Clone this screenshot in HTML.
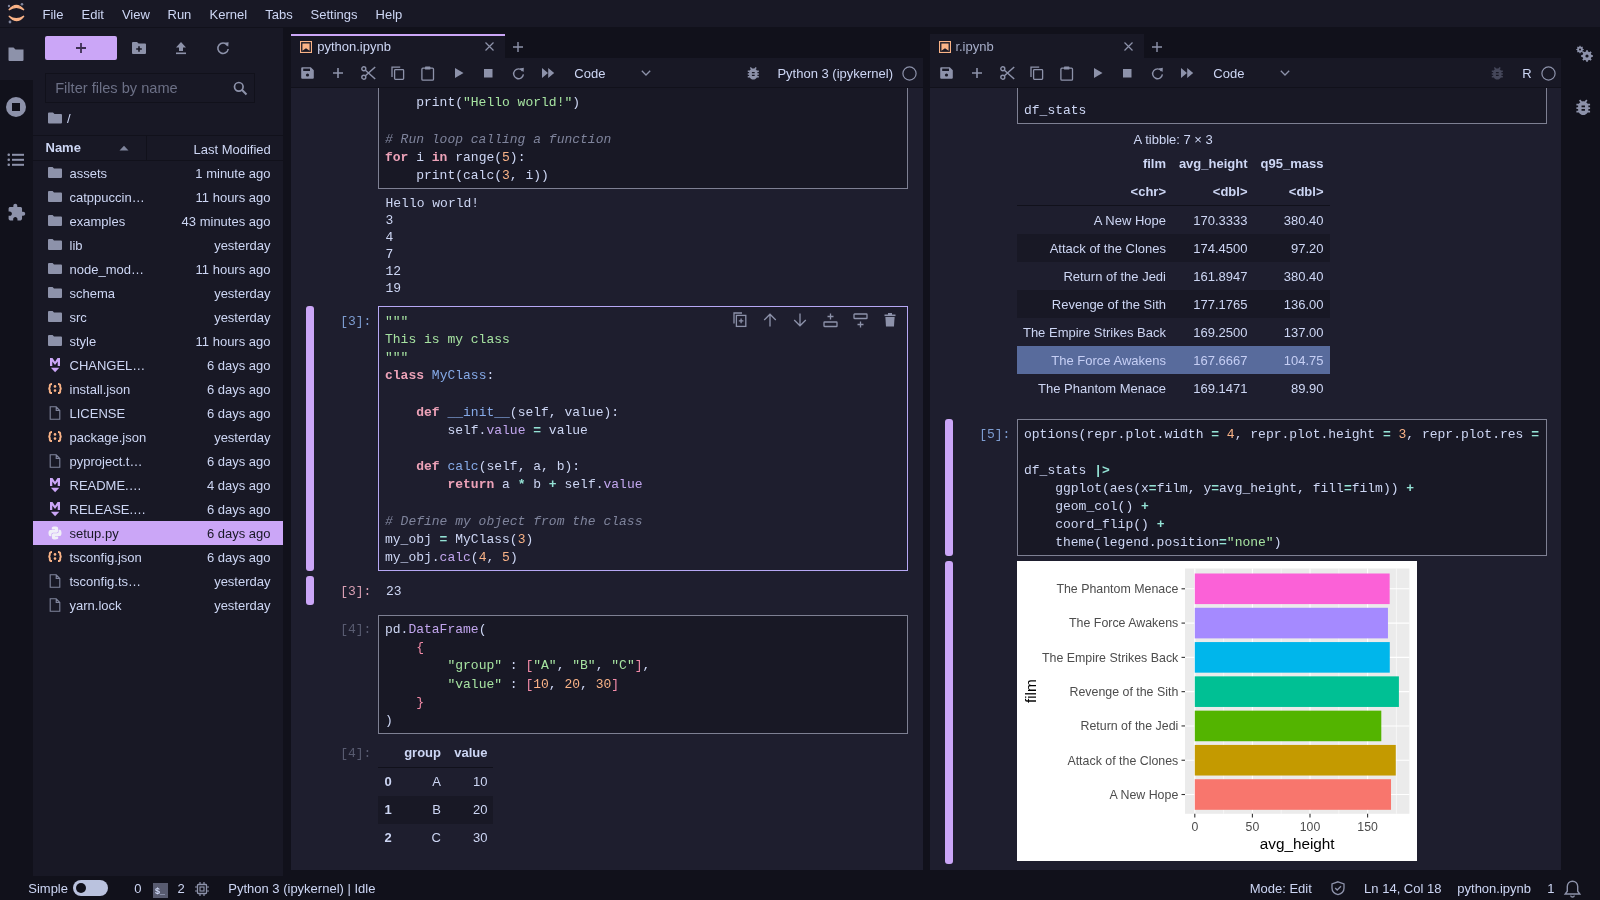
<!DOCTYPE html>
<html><head><meta charset="utf-8"><title>JupyterLab</title><style>
*{margin:0;padding:0;box-sizing:border-box}
html,body{width:1600px;height:900px;overflow:hidden;background:#11111b;font-family:"Liberation Sans",sans-serif;}
div{position:absolute}
.t{white-space:pre}
svg{position:absolute;overflow:visible}
.code{font-family:"Liberation Mono",monospace;font-size:13px;white-space:pre;color:#cdd6f4}
.code div{position:absolute;left:0}
.k{color:#eda2b8;font-weight:bold}
.s{color:#a6e3a1}
.n{color:#fab387}
.o{color:#94e2d5;font-weight:bold}
.f{color:#86aae8}
.p{color:#c2a6ee}
.c{color:#7f849c;font-style:italic}
.br{color:#f38ba8}
</style></head>
<body>
<div id="root" style="left:0;top:0;width:1600px;height:900px;will-change:transform"><div style="left:0;top:0;width:1600px;height:27px;background:#181825"></div><div style="left:0;top:28px;width:33px;height:848px;background:#11111b"></div><div style="left:0;top:28px;width:33px;height:52px;background:#181825"></div><div style="left:33px;top:28px;width:250px;height:848px;background:#181825"></div><svg style="left:0;top:0" width="30" height="27" viewBox="0 0 30 27">
<path d="M8.8 10 Q16.3 0.8 24 10 Q16.3 4.6 8.8 10Z" fill="#fab387" stroke="#fab387" stroke-width="1.2"/>
<path d="M8.8 16 Q16.3 25.4 24 16 Q16.3 21.4 8.8 16Z" fill="#fab387" stroke="#fab387" stroke-width="1.2"/>
<circle cx="9" cy="6" r="1.2" fill="#7f849c"/><circle cx="22" cy="4.2" r="1.3" fill="#7f849c"/><circle cx="10" cy="22" r="1.4" fill="#7f849c"/>
</svg><div class="t" style="left:42.5px;top:4.50px;font-size:13px;line-height:20px;color:#cdd6f4;font-weight:normal;font-family:'Liberation Sans', sans-serif;">File</div><div class="t" style="left:81.5px;top:4.50px;font-size:13px;line-height:20px;color:#cdd6f4;font-weight:normal;font-family:'Liberation Sans', sans-serif;">Edit</div><div class="t" style="left:121.9px;top:4.50px;font-size:13px;line-height:20px;color:#cdd6f4;font-weight:normal;font-family:'Liberation Sans', sans-serif;">View</div><div class="t" style="left:167.5px;top:4.50px;font-size:13px;line-height:20px;color:#cdd6f4;font-weight:normal;font-family:'Liberation Sans', sans-serif;">Run</div><div class="t" style="left:209.6px;top:4.50px;font-size:13px;line-height:20px;color:#cdd6f4;font-weight:normal;font-family:'Liberation Sans', sans-serif;">Kernel</div><div class="t" style="left:265.25px;top:4.50px;font-size:13px;line-height:20px;color:#cdd6f4;font-weight:normal;font-family:'Liberation Sans', sans-serif;">Tabs</div><div class="t" style="left:310.6px;top:4.50px;font-size:13px;line-height:20px;color:#cdd6f4;font-weight:normal;font-family:'Liberation Sans', sans-serif;">Settings</div><div class="t" style="left:375.6px;top:4.50px;font-size:13px;line-height:20px;color:#cdd6f4;font-weight:normal;font-family:'Liberation Sans', sans-serif;">Help</div><svg style="left:7px;top:46px" width="18" height="16" viewBox="0 0 18 16"><path d="M1.5 1.5h5l2 2h8v10.5a1 1 0 0 1-1 1h-13a1 1 0 0 1-1-1z" fill="#8d92aa"/></svg><svg style="left:5px;top:96px" width="22" height="22" viewBox="0 0 22 22"><circle cx="11" cy="11" r="10" fill="#8d92aa"/><rect x="7" y="7" width="8" height="8" fill="#11111b"/></svg><svg style="left:7px;top:153px" width="18" height="14" viewBox="0 0 18 14"><g fill="#8d92aa"><rect x="0.5" y="0.5" width="2.5" height="2.5" rx="1"/><rect x="0.5" y="5.5" width="2.5" height="2.5" rx="1"/><rect x="0.5" y="10.5" width="2.5" height="2.5" rx="1"/><rect x="5" y="0.8" width="12" height="2"/><rect x="5" y="5.8" width="12" height="2"/><rect x="5" y="10.8" width="12" height="2"/></g></svg><svg style="left:7px;top:203px" width="19" height="19" viewBox="0 0 24 24"><path d="M20.5 11H19V7c0-1.1-.9-2-2-2h-4V3.5C13 2.12 11.88 1 10.5 1S8 2.12 8 3.5V5H4c-1.1 0-1.99.9-1.99 2v3.8H3.5c1.49 0 2.7 1.21 2.7 2.7s-1.21 2.7-2.7 2.7H2V20c0 1.1.9 2 2 2h3.8v-1.5c0-1.49 1.21-2.7 2.7-2.7 1.49 0 2.7 1.21 2.7 2.7V22H17c1.1 0 2-.9 2-2v-4h1.5c1.38 0 2.5-1.12 2.5-2.5S21.88 11 20.5 11z" fill="#8d92aa"/></svg><div style="left:45px;top:36px;width:72px;height:24px;background:#cba6f7;border-radius:2px"></div><svg style="left:75px;top:42px" width="12" height="12" viewBox="0 0 12 12"><path d="M6 1v10M1 6h10" stroke="#3e3052" stroke-width="1.8"/></svg><svg style="left:131px;top:41px" width="16" height="14" viewBox="0 0 16 14"><path d="M1 2a1 1 0 0 1 1-1h4l1.6 1.6H14a1 1 0 0 1 1 1V12a1 1 0 0 1-1 1H2a1 1 0 0 1-1-1z" fill="#8d92aa"/><path d="M8 5.2v5.6M5.2 8h5.6" stroke="#181825" stroke-width="1.6"/></svg><svg style="left:175px;top:41px" width="12" height="14" viewBox="0 0 12 14"><path d="M6 1 L11 6.5 H8 V10 H4 V6.5 H1Z" fill="#8d92aa"/><rect x="1" y="11.5" width="10" height="1.6" fill="#8d92aa"/></svg><svg style="left:216px;top:41px" width="14" height="14" viewBox="0 0 14 14"><path d="M11.3 4.2A5.2 5.2 0 1 0 12.2 8" fill="none" stroke="#8d92aa" stroke-width="1.6"/><path d="M8 1.8 L12.6 1.2 L12.2 5.8Z" fill="#8d92aa"/></svg><div style="left:45px;top:73px;width:210px;height:30px;border:1px solid #11111b;background:#181825"></div><div class="t" style="left:55.2px;top:78.24px;font-size:14.6px;line-height:20px;color:#6c7086;font-weight:normal;font-family:'Liberation Sans', sans-serif;">Filter files by name</div><svg style="left:233px;top:81px" width="15" height="15" viewBox="0 0 15 15"><circle cx="5.8" cy="5.8" r="4.3" fill="none" stroke="#8d92aa" stroke-width="1.7"/><path d="M8.8 8.8 L13.5 13.5" stroke="#8d92aa" stroke-width="2"/></svg><svg style="left:47px;top:112px" width="16" height="12" viewBox="0 0 16 12"><path d="M1 1.5a1 1 0 0 1 1-1h4l1.5 1.5H14a1 1 0 0 1 1 1V10.5a1 1 0 0 1-1 1H2a1 1 0 0 1-1-1z" fill="#8d92aa"/></svg><div class="t" style="left:67px;top:108.50px;font-size:13px;line-height:20px;color:#cdd6f4;font-weight:normal;font-family:'Liberation Sans', sans-serif;">/</div><div style="left:33px;top:135px;width:250px;height:1px;background:#11111b"></div><div style="left:33px;top:160px;width:250px;height:1px;background:#11111b"></div><div style="left:146px;top:136px;width:1px;height:24px;background:#11111b"></div><div class="t" style="left:45.5px;top:137.50px;font-size:13px;line-height:20px;color:#cdd6f4;font-weight:bold;font-family:'Liberation Sans', sans-serif;">Name</div><svg style="left:119px;top:145px" width="10" height="6" viewBox="0 0 10 6"><path d="M0.5 5.5 L5 0.8 L9.5 5.5Z" fill="#7f849c"/></svg><div class="t" style="left:150.8px;width:120px;text-align:right;top:139.50px;font-size:13px;line-height:20px;color:#cdd6f4;font-weight:normal;font-family:'Liberation Sans', sans-serif;">Last Modified</div><svg style="left:48px;top:167px" width="14" height="11" viewBox="0 0 14 11"><path d="M0 1a1 1 0 0 1 1-1h3.6l1.4 1.4H13a1 1 0 0 1 1 1V10a1 1 0 0 1-1 1H1a1 1 0 0 1-1-1z" fill="#8d92aa"/></svg><div class="t" style="left:69.5px;top:164.00px;font-size:13px;line-height:20px;color:#cdd6f4;font-weight:normal;font-family:'Liberation Sans', sans-serif;">assets</div><div class="t" style="left:150.5px;width:120px;text-align:right;top:164.00px;font-size:13px;line-height:20px;color:#cdd6f4;font-weight:normal;font-family:'Liberation Sans', sans-serif;">1 minute ago</div><svg style="left:48px;top:191px" width="14" height="11" viewBox="0 0 14 11"><path d="M0 1a1 1 0 0 1 1-1h3.6l1.4 1.4H13a1 1 0 0 1 1 1V10a1 1 0 0 1-1 1H1a1 1 0 0 1-1-1z" fill="#8d92aa"/></svg><div class="t" style="left:69.5px;top:188.00px;font-size:13px;line-height:20px;color:#cdd6f4;font-weight:normal;font-family:'Liberation Sans', sans-serif;">catppuccin…</div><div class="t" style="left:150.5px;width:120px;text-align:right;top:188.00px;font-size:13px;line-height:20px;color:#cdd6f4;font-weight:normal;font-family:'Liberation Sans', sans-serif;">11 hours ago</div><svg style="left:48px;top:215px" width="14" height="11" viewBox="0 0 14 11"><path d="M0 1a1 1 0 0 1 1-1h3.6l1.4 1.4H13a1 1 0 0 1 1 1V10a1 1 0 0 1-1 1H1a1 1 0 0 1-1-1z" fill="#8d92aa"/></svg><div class="t" style="left:69.5px;top:212.00px;font-size:13px;line-height:20px;color:#cdd6f4;font-weight:normal;font-family:'Liberation Sans', sans-serif;">examples</div><div class="t" style="left:150.5px;width:120px;text-align:right;top:212.00px;font-size:13px;line-height:20px;color:#cdd6f4;font-weight:normal;font-family:'Liberation Sans', sans-serif;">43 minutes ago</div><svg style="left:48px;top:239px" width="14" height="11" viewBox="0 0 14 11"><path d="M0 1a1 1 0 0 1 1-1h3.6l1.4 1.4H13a1 1 0 0 1 1 1V10a1 1 0 0 1-1 1H1a1 1 0 0 1-1-1z" fill="#8d92aa"/></svg><div class="t" style="left:69.5px;top:236.00px;font-size:13px;line-height:20px;color:#cdd6f4;font-weight:normal;font-family:'Liberation Sans', sans-serif;">lib</div><div class="t" style="left:150.5px;width:120px;text-align:right;top:236.00px;font-size:13px;line-height:20px;color:#cdd6f4;font-weight:normal;font-family:'Liberation Sans', sans-serif;">yesterday</div><svg style="left:48px;top:263px" width="14" height="11" viewBox="0 0 14 11"><path d="M0 1a1 1 0 0 1 1-1h3.6l1.4 1.4H13a1 1 0 0 1 1 1V10a1 1 0 0 1-1 1H1a1 1 0 0 1-1-1z" fill="#8d92aa"/></svg><div class="t" style="left:69.5px;top:260.00px;font-size:13px;line-height:20px;color:#cdd6f4;font-weight:normal;font-family:'Liberation Sans', sans-serif;">node_mod…</div><div class="t" style="left:150.5px;width:120px;text-align:right;top:260.00px;font-size:13px;line-height:20px;color:#cdd6f4;font-weight:normal;font-family:'Liberation Sans', sans-serif;">11 hours ago</div><svg style="left:48px;top:287px" width="14" height="11" viewBox="0 0 14 11"><path d="M0 1a1 1 0 0 1 1-1h3.6l1.4 1.4H13a1 1 0 0 1 1 1V10a1 1 0 0 1-1 1H1a1 1 0 0 1-1-1z" fill="#8d92aa"/></svg><div class="t" style="left:69.5px;top:284.00px;font-size:13px;line-height:20px;color:#cdd6f4;font-weight:normal;font-family:'Liberation Sans', sans-serif;">schema</div><div class="t" style="left:150.5px;width:120px;text-align:right;top:284.00px;font-size:13px;line-height:20px;color:#cdd6f4;font-weight:normal;font-family:'Liberation Sans', sans-serif;">yesterday</div><svg style="left:48px;top:311px" width="14" height="11" viewBox="0 0 14 11"><path d="M0 1a1 1 0 0 1 1-1h3.6l1.4 1.4H13a1 1 0 0 1 1 1V10a1 1 0 0 1-1 1H1a1 1 0 0 1-1-1z" fill="#8d92aa"/></svg><div class="t" style="left:69.5px;top:308.00px;font-size:13px;line-height:20px;color:#cdd6f4;font-weight:normal;font-family:'Liberation Sans', sans-serif;">src</div><div class="t" style="left:150.5px;width:120px;text-align:right;top:308.00px;font-size:13px;line-height:20px;color:#cdd6f4;font-weight:normal;font-family:'Liberation Sans', sans-serif;">yesterday</div><svg style="left:48px;top:335px" width="14" height="11" viewBox="0 0 14 11"><path d="M0 1a1 1 0 0 1 1-1h3.6l1.4 1.4H13a1 1 0 0 1 1 1V10a1 1 0 0 1-1 1H1a1 1 0 0 1-1-1z" fill="#8d92aa"/></svg><div class="t" style="left:69.5px;top:332.00px;font-size:13px;line-height:20px;color:#cdd6f4;font-weight:normal;font-family:'Liberation Sans', sans-serif;">style</div><div class="t" style="left:150.5px;width:120px;text-align:right;top:332.00px;font-size:13px;line-height:20px;color:#cdd6f4;font-weight:normal;font-family:'Liberation Sans', sans-serif;">11 hours ago</div><svg style="left:50px;top:358px" width="10" height="15" viewBox="0 0 10 15"><path d="M0 8V0H2.5L5 3.7L7.5 0H10V8H7.7V3.6L5 6.9L2.3 3.6V8Z" fill="#cba6f7"/><path d="M0.9 9.8H9.3L5.1 14.3Z" fill="#cba6f7"/></svg><div class="t" style="left:69.5px;top:356.00px;font-size:13px;line-height:20px;color:#cdd6f4;font-weight:normal;font-family:'Liberation Sans', sans-serif;">CHANGEL…</div><div class="t" style="left:150.5px;width:120px;text-align:right;top:356.00px;font-size:13px;line-height:20px;color:#cdd6f4;font-weight:normal;font-family:'Liberation Sans', sans-serif;">6 days ago</div><svg style="left:48px;top:383.2px" width="14" height="11" viewBox="0 0 14 11"><g fill="none" stroke="#fab387" stroke-width="1.9"><path d="M4 1 Q1.8 1 1.8 2.6 V4 Q1.8 5.5 0.3 5.5 Q1.8 5.5 1.8 7 V8.4 Q1.8 10 4 10"/><path d="M10 1 Q12.2 1 12.2 2.6 V4 Q12.2 5.5 13.7 5.5 Q12.2 5.5 12.2 7 V8.4 Q12.2 10 10 10"/></g><circle cx="7" cy="3.4" r="1.3" fill="#fab387"/><circle cx="7" cy="7.6" r="1.3" fill="#fab387"/></svg><div class="t" style="left:69.5px;top:380.00px;font-size:13px;line-height:20px;color:#cdd6f4;font-weight:normal;font-family:'Liberation Sans', sans-serif;">install.json</div><div class="t" style="left:150.5px;width:120px;text-align:right;top:380.00px;font-size:13px;line-height:20px;color:#cdd6f4;font-weight:normal;font-family:'Liberation Sans', sans-serif;">6 days ago</div><svg style="left:49px;top:406px" width="12" height="14" viewBox="0 0 12 14"><path d="M1.2 0.8h6l3.6 3.6v8.8H1.2z M7.2 0.8v3.6h3.6" fill="none" stroke="#7f849c" stroke-width="1.1"/></svg><div class="t" style="left:69.5px;top:404.00px;font-size:13px;line-height:20px;color:#cdd6f4;font-weight:normal;font-family:'Liberation Sans', sans-serif;">LICENSE</div><div class="t" style="left:150.5px;width:120px;text-align:right;top:404.00px;font-size:13px;line-height:20px;color:#cdd6f4;font-weight:normal;font-family:'Liberation Sans', sans-serif;">6 days ago</div><svg style="left:48px;top:431.2px" width="14" height="11" viewBox="0 0 14 11"><g fill="none" stroke="#fab387" stroke-width="1.9"><path d="M4 1 Q1.8 1 1.8 2.6 V4 Q1.8 5.5 0.3 5.5 Q1.8 5.5 1.8 7 V8.4 Q1.8 10 4 10"/><path d="M10 1 Q12.2 1 12.2 2.6 V4 Q12.2 5.5 13.7 5.5 Q12.2 5.5 12.2 7 V8.4 Q12.2 10 10 10"/></g><circle cx="7" cy="3.4" r="1.3" fill="#fab387"/><circle cx="7" cy="7.6" r="1.3" fill="#fab387"/></svg><div class="t" style="left:69.5px;top:428.00px;font-size:13px;line-height:20px;color:#cdd6f4;font-weight:normal;font-family:'Liberation Sans', sans-serif;">package.json</div><div class="t" style="left:150.5px;width:120px;text-align:right;top:428.00px;font-size:13px;line-height:20px;color:#cdd6f4;font-weight:normal;font-family:'Liberation Sans', sans-serif;">yesterday</div><svg style="left:49px;top:454px" width="12" height="14" viewBox="0 0 12 14"><path d="M1.2 0.8h6l3.6 3.6v8.8H1.2z M7.2 0.8v3.6h3.6" fill="none" stroke="#7f849c" stroke-width="1.1"/></svg><div class="t" style="left:69.5px;top:452.00px;font-size:13px;line-height:20px;color:#cdd6f4;font-weight:normal;font-family:'Liberation Sans', sans-serif;">pyproject.t…</div><div class="t" style="left:150.5px;width:120px;text-align:right;top:452.00px;font-size:13px;line-height:20px;color:#cdd6f4;font-weight:normal;font-family:'Liberation Sans', sans-serif;">6 days ago</div><svg style="left:50px;top:478px" width="10" height="15" viewBox="0 0 10 15"><path d="M0 8V0H2.5L5 3.7L7.5 0H10V8H7.7V3.6L5 6.9L2.3 3.6V8Z" fill="#cba6f7"/><path d="M0.9 9.8H9.3L5.1 14.3Z" fill="#cba6f7"/></svg><div class="t" style="left:69.5px;top:476.00px;font-size:13px;line-height:20px;color:#cdd6f4;font-weight:normal;font-family:'Liberation Sans', sans-serif;">README.…</div><div class="t" style="left:150.5px;width:120px;text-align:right;top:476.00px;font-size:13px;line-height:20px;color:#cdd6f4;font-weight:normal;font-family:'Liberation Sans', sans-serif;">4 days ago</div><svg style="left:50px;top:502px" width="10" height="15" viewBox="0 0 10 15"><path d="M0 8V0H2.5L5 3.7L7.5 0H10V8H7.7V3.6L5 6.9L2.3 3.6V8Z" fill="#cba6f7"/><path d="M0.9 9.8H9.3L5.1 14.3Z" fill="#cba6f7"/></svg><div class="t" style="left:69.5px;top:500.00px;font-size:13px;line-height:20px;color:#cdd6f4;font-weight:normal;font-family:'Liberation Sans', sans-serif;">RELEASE.…</div><div class="t" style="left:150.5px;width:120px;text-align:right;top:500.00px;font-size:13px;line-height:20px;color:#cdd6f4;font-weight:normal;font-family:'Liberation Sans', sans-serif;">6 days ago</div><div style="left:33px;top:521px;width:250px;height:24px;background:#cba6f7"></div><svg style="left:48px;top:526px" width="14" height="14" viewBox="0 0 14 14"><path d="M6.8 0.5C3.6 0.5 3.8 1.9 3.8 1.9V3.4H7V3.9H2.5S0.5 3.7 0.5 7c0 3.3 1.8 3.2 1.8 3.2H3.4V8.6S3.3 6.8 5.2 6.8H8.3S10.1 6.8 10.1 5.1V2.2S10.4 0.5 6.8 0.5z" fill="#f0f0f8"/><path d="M7.2 13.5C10.4 13.5 10.2 12.1 10.2 12.1V10.6H7V10.1H11.5S13.5 10.3 13.5 7c0-3.3-1.8-3.2-1.8-3.2H10.6V5.4S10.7 7.2 8.8 7.2H5.7S3.9 7.2 3.9 8.9V11.8S3.6 13.5 7.2 13.5z" fill="#f0f0f8"/></svg><div class="t" style="left:69.5px;top:524.00px;font-size:13px;line-height:20px;color:#181825;font-weight:normal;font-family:'Liberation Sans', sans-serif;">setup.py</div><div class="t" style="left:150.5px;width:120px;text-align:right;top:524.00px;font-size:13px;line-height:20px;color:#181825;font-weight:normal;font-family:'Liberation Sans', sans-serif;">6 days ago</div><svg style="left:48px;top:551.2px" width="14" height="11" viewBox="0 0 14 11"><g fill="none" stroke="#fab387" stroke-width="1.9"><path d="M4 1 Q1.8 1 1.8 2.6 V4 Q1.8 5.5 0.3 5.5 Q1.8 5.5 1.8 7 V8.4 Q1.8 10 4 10"/><path d="M10 1 Q12.2 1 12.2 2.6 V4 Q12.2 5.5 13.7 5.5 Q12.2 5.5 12.2 7 V8.4 Q12.2 10 10 10"/></g><circle cx="7" cy="3.4" r="1.3" fill="#fab387"/><circle cx="7" cy="7.6" r="1.3" fill="#fab387"/></svg><div class="t" style="left:69.5px;top:548.00px;font-size:13px;line-height:20px;color:#cdd6f4;font-weight:normal;font-family:'Liberation Sans', sans-serif;">tsconfig.json</div><div class="t" style="left:150.5px;width:120px;text-align:right;top:548.00px;font-size:13px;line-height:20px;color:#cdd6f4;font-weight:normal;font-family:'Liberation Sans', sans-serif;">6 days ago</div><svg style="left:49px;top:574px" width="12" height="14" viewBox="0 0 12 14"><path d="M1.2 0.8h6l3.6 3.6v8.8H1.2z M7.2 0.8v3.6h3.6" fill="none" stroke="#7f849c" stroke-width="1.1"/></svg><div class="t" style="left:69.5px;top:572.00px;font-size:13px;line-height:20px;color:#cdd6f4;font-weight:normal;font-family:'Liberation Sans', sans-serif;">tsconfig.ts…</div><div class="t" style="left:150.5px;width:120px;text-align:right;top:572.00px;font-size:13px;line-height:20px;color:#cdd6f4;font-weight:normal;font-family:'Liberation Sans', sans-serif;">yesterday</div><svg style="left:49px;top:598px" width="12" height="14" viewBox="0 0 12 14"><path d="M1.2 0.8h6l3.6 3.6v8.8H1.2z M7.2 0.8v3.6h3.6" fill="none" stroke="#7f849c" stroke-width="1.1"/></svg><div class="t" style="left:69.5px;top:596.00px;font-size:13px;line-height:20px;color:#cdd6f4;font-weight:normal;font-family:'Liberation Sans', sans-serif;">yarn.lock</div><div class="t" style="left:150.5px;width:120px;text-align:right;top:596.00px;font-size:13px;line-height:20px;color:#cdd6f4;font-weight:normal;font-family:'Liberation Sans', sans-serif;">yesterday</div><div style="left:291px;top:34px;width:214px;height:24px;background:#181825"></div><div style="left:291px;top:34px;width:214px;height:2px;background:#cba6f7"></div><svg style="left:300px;top:41px" width="12" height="12" viewBox="0 0 13 13"><rect x="0.6" y="0.6" width="11.8" height="11.8" fill="none" stroke="#fab387" stroke-width="1.2"/><path d="M2.6 2.6h7.8v8L6.5 7.8 2.6 10.6z" fill="#fab387"/></svg><div class="t" style="left:317.2px;top:37.00px;font-size:13px;line-height:20px;color:#cdd6f4;font-weight:normal;font-family:'Liberation Sans', sans-serif;">python.ipynb</div><svg style="left:484.5px;top:42.1px" width="9" height="9" viewBox="0 0 9 9"><path d="M0.5 0.5L8.5 8.5M8.5 0.5L0.5 8.5" stroke="#8d92aa" stroke-width="1.2"/></svg><svg style="left:513px;top:41.5px" width="10" height="10" viewBox="0 0 10 10"><path d="M5 0v10M0 5h10" stroke="#8d92aa" stroke-width="1.4"/></svg><div style="left:291px;top:58px;width:632px;height:29px;background:#181825"></div><div style="left:291px;top:87px;width:632px;height:1px;background:#11111b"></div><div style="left:291px;top:88px;width:632px;height:782px;background:#1e1e2e;overflow:hidden"></div><svg style="left:301px;top:67px" width="13" height="12" viewBox="0 0 13 12"><path d="M1.2 0.2h8.6l3 3v7.6a1 1 0 0 1-1 1H1.2a1 1 0 0 1-1-1V1.2a1 1 0 0 1 1-1z" fill="#8d92aa"/><rect x="2.2" y="1.6" width="6.8" height="2.4" fill="#181825"/><circle cx="6.5" cy="8" r="1.6" fill="#181825"/></svg><svg style="left:333px;top:68px" width="10" height="10" viewBox="0 0 10 10"><path d="M5 0v10M0 5h10" stroke="#8d92aa" stroke-width="1.6"/></svg><svg style="left:361px;top:66px" width="15" height="14" viewBox="0 0 15 14"><circle cx="2.8" cy="2.8" r="2" fill="none" stroke="#8d92aa" stroke-width="1.4"/><circle cx="2.8" cy="11.2" r="2" fill="none" stroke="#8d92aa" stroke-width="1.4"/><path d="M4.4 4.2L14.2 13M4.4 9.8L14.2 1" stroke="#8d92aa" stroke-width="1.5"/></svg><svg style="left:391px;top:66px" width="14" height="14" viewBox="0 0 14 14"><path d="M1 11V1.2h8.2" fill="none" stroke="#8d92aa" stroke-width="1.3"/><rect x="3.6" y="3.6" width="9" height="9.8" rx="0.8" fill="none" stroke="#8d92aa" stroke-width="1.3"/></svg><svg style="left:421px;top:65.5px" width="14" height="15" viewBox="0 0 14 15"><rect x="0.9" y="2.2" width="11.6" height="12" rx="1" fill="none" stroke="#8d92aa" stroke-width="1.3"/><rect x="4" y="0.6" width="5.4" height="3" rx="0.6" fill="#8d92aa"/></svg><svg style="left:454.5px;top:68px" width="9" height="10" viewBox="0 0 9 10"><path d="M0 0L8.5 5L0 10z" fill="#8d92aa"/></svg><svg style="left:483.7px;top:68.5px" width="9" height="9" viewBox="0 0 9 9"><rect width="8.5" height="8.5" fill="#8d92aa"/></svg><svg style="left:512px;top:66.5px" width="13" height="13" viewBox="0 0 13 13"><path d="M10.6 4A4.9 4.9 0 1 0 11.4 7.4" fill="none" stroke="#8d92aa" stroke-width="1.4"/><path d="M7.6 1.6L11.8 0.8L11.6 5z" fill="#8d92aa"/></svg><svg style="left:542px;top:68px" width="13" height="10" viewBox="0 0 13 10"><path d="M0 0L6 5L0 10zM6.2 0L12.2 5L6.2 10z" fill="#8d92aa"/></svg><div class="t" style="left:574.3px;top:64.10px;font-size:13px;line-height:20px;color:#cdd6f4;font-weight:normal;font-family:'Liberation Sans', sans-serif;">Code</div><svg style="left:640.5px;top:70px" width="10" height="6" viewBox="0 0 10 6"><path d="M0.8 0.8L5 5L9.2 0.8" fill="none" stroke="#8d92aa" stroke-width="1.3"/></svg><svg style="left:744.6999999999999px;top:65px" width="16.6" height="16.6" viewBox="0 0 24 24"><path d="M20 8h-2.81c-.45-.78-1.07-1.45-1.82-1.96L17 4.41 15.59 3l-2.17 2.17C12.96 5.06 12.49 5 12 5c-.49 0-.96.06-1.41.17L8.41 3 7 4.41l1.62 1.63C7.88 6.55 7.26 7.22 6.81 8H4v2h2.09c-.05.33-.09.66-.09 1v1H4v2h2v1c0 .34.04.67.09 1H4v2h2.81c1.04 1.79 2.97 3 5.19 3s4.15-1.21 5.19-3H20v-2h-2.09c.05-.33.09-.66.09-1v-1h2v-2h-2v-1c0-.34-.04-.67-.09-1H20V8zm-6 8h-4v-2h4v2zm0-4h-4v-2h4v2z" fill="#8d92aa"/></svg><div class="t" style="left:777.4px;top:64.10px;font-size:13px;line-height:20px;color:#cdd6f4;font-weight:normal;font-family:'Liberation Sans', sans-serif;">Python 3 (ipykernel)</div><svg style="left:901.8px;top:65.8px" width="15" height="15" viewBox="0 0 15 15"><circle cx="7.5" cy="7.5" r="6.6" fill="none" stroke="#8d92aa" stroke-width="1.2"/></svg><div style="left:930px;top:34px;width:214px;height:24px;background:#181825"></div><svg style="left:939px;top:41px" width="12" height="12" viewBox="0 0 13 13"><rect x="0.6" y="0.6" width="11.8" height="11.8" fill="none" stroke="#fab387" stroke-width="1.2"/><path d="M2.6 2.6h7.8v8L6.5 7.8 2.6 10.6z" fill="#fab387"/></svg><div class="t" style="left:955.4px;top:37.00px;font-size:13px;line-height:20px;color:#a6adc8;font-weight:normal;font-family:'Liberation Sans', sans-serif;">r.ipynb</div><svg style="left:1123.5px;top:42.1px" width="9" height="9" viewBox="0 0 9 9"><path d="M0.5 0.5L8.5 8.5M8.5 0.5L0.5 8.5" stroke="#8d92aa" stroke-width="1.2"/></svg><svg style="left:1152px;top:41.5px" width="10" height="10" viewBox="0 0 10 10"><path d="M5 0v10M0 5h10" stroke="#8d92aa" stroke-width="1.4"/></svg><div style="left:930px;top:58px;width:631px;height:29px;background:#181825"></div><div style="left:930px;top:87px;width:631px;height:1px;background:#11111b"></div><div style="left:930px;top:88px;width:631px;height:782px;background:#1e1e2e;overflow:hidden"></div><svg style="left:940px;top:67px" width="13" height="12" viewBox="0 0 13 12"><path d="M1.2 0.2h8.6l3 3v7.6a1 1 0 0 1-1 1H1.2a1 1 0 0 1-1-1V1.2a1 1 0 0 1 1-1z" fill="#8d92aa"/><rect x="2.2" y="1.6" width="6.8" height="2.4" fill="#181825"/><circle cx="6.5" cy="8" r="1.6" fill="#181825"/></svg><svg style="left:972px;top:68px" width="10" height="10" viewBox="0 0 10 10"><path d="M5 0v10M0 5h10" stroke="#8d92aa" stroke-width="1.6"/></svg><svg style="left:1000px;top:66px" width="15" height="14" viewBox="0 0 15 14"><circle cx="2.8" cy="2.8" r="2" fill="none" stroke="#8d92aa" stroke-width="1.4"/><circle cx="2.8" cy="11.2" r="2" fill="none" stroke="#8d92aa" stroke-width="1.4"/><path d="M4.4 4.2L14.2 13M4.4 9.8L14.2 1" stroke="#8d92aa" stroke-width="1.5"/></svg><svg style="left:1030px;top:66px" width="14" height="14" viewBox="0 0 14 14"><path d="M1 11V1.2h8.2" fill="none" stroke="#8d92aa" stroke-width="1.3"/><rect x="3.6" y="3.6" width="9" height="9.8" rx="0.8" fill="none" stroke="#8d92aa" stroke-width="1.3"/></svg><svg style="left:1060px;top:65.5px" width="14" height="15" viewBox="0 0 14 15"><rect x="0.9" y="2.2" width="11.6" height="12" rx="1" fill="none" stroke="#8d92aa" stroke-width="1.3"/><rect x="4" y="0.6" width="5.4" height="3" rx="0.6" fill="#8d92aa"/></svg><svg style="left:1093.5px;top:68px" width="9" height="10" viewBox="0 0 9 10"><path d="M0 0L8.5 5L0 10z" fill="#8d92aa"/></svg><svg style="left:1122.7px;top:68.5px" width="9" height="9" viewBox="0 0 9 9"><rect width="8.5" height="8.5" fill="#8d92aa"/></svg><svg style="left:1151px;top:66.5px" width="13" height="13" viewBox="0 0 13 13"><path d="M10.6 4A4.9 4.9 0 1 0 11.4 7.4" fill="none" stroke="#8d92aa" stroke-width="1.4"/><path d="M7.6 1.6L11.8 0.8L11.6 5z" fill="#8d92aa"/></svg><svg style="left:1181px;top:68px" width="13" height="10" viewBox="0 0 13 10"><path d="M0 0L6 5L0 10zM6.2 0L12.2 5L6.2 10z" fill="#8d92aa"/></svg><div class="t" style="left:1213.3px;top:64.10px;font-size:13px;line-height:20px;color:#cdd6f4;font-weight:normal;font-family:'Liberation Sans', sans-serif;">Code</div><svg style="left:1279.5px;top:70px" width="10" height="6" viewBox="0 0 10 6"><path d="M0.8 0.8L5 5L9.2 0.8" fill="none" stroke="#8d92aa" stroke-width="1.3"/></svg><svg style="left:1488.9px;top:65px" width="16.6" height="16.6" viewBox="0 0 24 24"><path d="M20 8h-2.81c-.45-.78-1.07-1.45-1.82-1.96L17 4.41 15.59 3l-2.17 2.17C12.96 5.06 12.49 5 12 5c-.49 0-.96.06-1.41.17L8.41 3 7 4.41l1.62 1.63C7.88 6.55 7.26 7.22 6.81 8H4v2h2.09c-.05.33-.09.66-.09 1v1H4v2h2v1c0 .34.04.67.09 1H4v2h2.81c1.04 1.79 2.97 3 5.19 3s4.15-1.21 5.19-3H20v-2h-2.09c.05-.33.09-.66.09-1v-1h2v-2h-2v-1c0-.34-.04-.67-.09-1H20V8zm-6 8h-4v-2h4v2zm0-4h-4v-2h4v2z" fill="#45475a"/></svg><div class="t" style="left:1522.2px;top:64.10px;font-size:13px;line-height:20px;color:#cdd6f4;font-weight:normal;font-family:'Liberation Sans', sans-serif;">R</div><svg style="left:1540.8px;top:65.8px" width="15" height="15" viewBox="0 0 15 15"><circle cx="7.5" cy="7.5" r="6.6" fill="none" stroke="#8d92aa" stroke-width="1.2"/></svg><svg style="left:1575px;top:45px" width="18" height="18" viewBox="0 0 18 18"><g fill="#8d92aa"><circle cx="12" cy="11" r="4.6"/><circle cx="5" cy="4.5" r="2.9"/></g><circle cx="12" cy="11" r="1.6" fill="#11111b"/><circle cx="5" cy="4.5" r="1" fill="#11111b"/><g stroke="#8d92aa" stroke-width="1.8"><path d="M12 5.2v11.6M6.2 11h11.6M7.9 6.9l8.2 8.2M7.9 15.1l8.2-8.2"/></g><g stroke="#8d92aa" stroke-width="1.1"><path d="M5 0.8v7.4M1.3 4.5h7.4M2.4 1.9l5.2 5.2M2.4 7.1l5.2-5.2"/></g><circle cx="12" cy="11" r="1.6" fill="#11111b"/><circle cx="5" cy="4.5" r="1" fill="#11111b"/></svg><svg style="left:1573.3px;top:97px" width="20.5" height="20.5" viewBox="0 0 24 24"><path d="M20 8h-2.81c-.45-.78-1.07-1.45-1.82-1.96L17 4.41 15.59 3l-2.17 2.17C12.96 5.06 12.49 5 12 5c-.49 0-.96.06-1.41.17L8.41 3 7 4.41l1.62 1.63C7.88 6.55 7.26 7.22 6.81 8H4v2h2.09c-.05.33-.09.66-.09 1v1H4v2h2v1c0 .34.04.67.09 1H4v2h2.81c1.04 1.79 2.97 3 5.19 3s4.15-1.21 5.19-3H20v-2h-2.09c.05-.33.09-.66.09-1v-1h2v-2h-2v-1c0-.34-.04-.67-.09-1H20V8zm-6 8h-4v-2h4v2zm0-4h-4v-2h4v2z" fill="#8d92aa"/></svg><div style="left:291px;top:88px;width:632px;height:782px;overflow:hidden"><div style="left:87px;top:-18px;width:530px;height:119px;background:#181825;border:1px solid #7e8093"></div><div class="t" style="left:94px;top:5.24px;font-size:13px;line-height:20px;color:#cdd6f4;font-weight:normal;font-family:'Liberation Mono', monospace;">    print(<span class="s">"Hello world!"</span>)</div><div class="t" style="left:94px;top:23.39px;font-size:13px;line-height:20px;color:#cdd6f4;font-weight:normal;font-family:'Liberation Mono', monospace;"></div><div class="t" style="left:94px;top:41.54px;font-size:13px;line-height:20px;color:#cdd6f4;font-weight:normal;font-family:'Liberation Mono', monospace;"><span class="c"># Run loop calling a function</span></div><div class="t" style="left:94px;top:59.69px;font-size:13px;line-height:20px;color:#cdd6f4;font-weight:normal;font-family:'Liberation Mono', monospace;"><span class="k">for</span> i <span class="k">in</span> range(<span class="n">5</span>):</div><div class="t" style="left:94px;top:77.84px;font-size:13px;line-height:20px;color:#cdd6f4;font-weight:normal;font-family:'Liberation Mono', monospace;">    print(calc(<span class="n">3</span>, i))</div><div class="t" style="left:94.5px;top:106.34px;font-size:13px;line-height:20px;color:#cdd6f4;font-weight:normal;font-family:'Liberation Mono', monospace;">Hello world!</div><div class="t" style="left:94.5px;top:123.34px;font-size:13px;line-height:20px;color:#cdd6f4;font-weight:normal;font-family:'Liberation Mono', monospace;">3</div><div class="t" style="left:94.5px;top:140.34px;font-size:13px;line-height:20px;color:#cdd6f4;font-weight:normal;font-family:'Liberation Mono', monospace;">4</div><div class="t" style="left:94.5px;top:157.34px;font-size:13px;line-height:20px;color:#cdd6f4;font-weight:normal;font-family:'Liberation Mono', monospace;">7</div><div class="t" style="left:94.5px;top:174.34px;font-size:13px;line-height:20px;color:#cdd6f4;font-weight:normal;font-family:'Liberation Mono', monospace;">12</div><div class="t" style="left:94.5px;top:191.34px;font-size:13px;line-height:20px;color:#cdd6f4;font-weight:normal;font-family:'Liberation Mono', monospace;">19</div><div style="left:15px;top:218px;width:8px;height:265px;background:#cba6f7;border-radius:3px"></div><div style="left:87px;top:218px;width:530px;height:265px;background:#1e1e2e;border:1px solid #b7a8f5"></div><div class="t" style="left:20.399999999999977px;width:60px;text-align:right;top:223.94px;font-size:13px;line-height:20px;color:#7d9cd0;font-weight:normal;font-family:'Liberation Mono', monospace;">[3]:</div><div class="t" style="left:94px;top:223.94px;font-size:13px;line-height:20px;color:#cdd6f4;font-weight:normal;font-family:'Liberation Mono', monospace;"><span class="s">"""</span></div><div class="t" style="left:94px;top:242.09px;font-size:13px;line-height:20px;color:#cdd6f4;font-weight:normal;font-family:'Liberation Mono', monospace;"><span class="s">This is my class</span></div><div class="t" style="left:94px;top:260.24px;font-size:13px;line-height:20px;color:#cdd6f4;font-weight:normal;font-family:'Liberation Mono', monospace;"><span class="s">"""</span></div><div class="t" style="left:94px;top:278.39px;font-size:13px;line-height:20px;color:#cdd6f4;font-weight:normal;font-family:'Liberation Mono', monospace;"><span class="k">class</span> <span class="f">MyClass</span>:</div><div class="t" style="left:94px;top:296.54px;font-size:13px;line-height:20px;color:#cdd6f4;font-weight:normal;font-family:'Liberation Mono', monospace;"></div><div class="t" style="left:94px;top:314.69px;font-size:13px;line-height:20px;color:#cdd6f4;font-weight:normal;font-family:'Liberation Mono', monospace;">    <span class="k">def</span> <span class="f">__init__</span>(self, value):</div><div class="t" style="left:94px;top:332.84px;font-size:13px;line-height:20px;color:#cdd6f4;font-weight:normal;font-family:'Liberation Mono', monospace;">        self.<span class="p">value</span> <span class="o">=</span> value</div><div class="t" style="left:94px;top:350.99px;font-size:13px;line-height:20px;color:#cdd6f4;font-weight:normal;font-family:'Liberation Mono', monospace;"></div><div class="t" style="left:94px;top:369.14px;font-size:13px;line-height:20px;color:#cdd6f4;font-weight:normal;font-family:'Liberation Mono', monospace;">    <span class="k">def</span> <span class="f">calc</span>(self, a, b):</div><div class="t" style="left:94px;top:387.29px;font-size:13px;line-height:20px;color:#cdd6f4;font-weight:normal;font-family:'Liberation Mono', monospace;">        <span class="k">return</span> a <span class="o">*</span> b <span class="o">+</span> self.<span class="p">value</span></div><div class="t" style="left:94px;top:405.44px;font-size:13px;line-height:20px;color:#cdd6f4;font-weight:normal;font-family:'Liberation Mono', monospace;"></div><div class="t" style="left:94px;top:423.59px;font-size:13px;line-height:20px;color:#cdd6f4;font-weight:normal;font-family:'Liberation Mono', monospace;"><span class="c"># Define my object from the class</span></div><div class="t" style="left:94px;top:441.74px;font-size:13px;line-height:20px;color:#cdd6f4;font-weight:normal;font-family:'Liberation Mono', monospace;">my_obj <span class="o">=</span> MyClass(<span class="n">3</span>)</div><div class="t" style="left:94px;top:459.89px;font-size:13px;line-height:20px;color:#cdd6f4;font-weight:normal;font-family:'Liberation Mono', monospace;">my_obj.<span class="p">calc</span>(<span class="n">4</span>, <span class="n">5</span>)</div><svg style="left:442px;top:224px" width="14" height="15" viewBox="0 0 14 15"><path d="M1 11.5V1h8" stroke="#8d92aa" stroke-width="1.3" fill="none"/><rect x="3.4" y="3.4" width="9.4" height="11" stroke="#8d92aa" stroke-width="1.3" fill="none"/><path d="M8.1 6.6v4.6M5.8 8.9h4.6" stroke="#8d92aa" stroke-width="1.3" fill="none"/></svg><svg style="left:472px;top:224.5px" width="14" height="14" viewBox="0 0 14 14"><path d="M7 13.5V1.2M1.2 7L7 1.2L12.8 7" stroke="#8d92aa" stroke-width="1.3" fill="none"/></svg><svg style="left:502px;top:224.5px" width="14" height="14" viewBox="0 0 14 14"><path d="M7 0.5V12.8M1.2 7L7 12.8L12.8 7" stroke="#8d92aa" stroke-width="1.3" fill="none"/></svg><svg style="left:531.5px;top:224.5px" width="15" height="15" viewBox="0 0 15 15"><path d="M7.5 0.5v6M4.5 3.5h6" stroke="#8d92aa" stroke-width="1.3" fill="none" stroke-width="1.5"/><rect x="1" y="9" width="13" height="4.5" rx="0.6" stroke="#8d92aa" stroke-width="1.3" fill="none" stroke-width="1.4"/></svg><svg style="left:561.5px;top:224.5px" width="15" height="15" viewBox="0 0 15 15"><rect x="1" y="1" width="13" height="4.5" rx="0.6" stroke="#8d92aa" stroke-width="1.3" fill="none" stroke-width="1.4"/><path d="M7.5 8.5v6M4.5 11.5h6" stroke="#8d92aa" stroke-width="1.3" fill="none" stroke-width="1.5"/></svg><svg style="left:593px;top:224.5px" width="12" height="14" viewBox="0 0 12 14"><rect x="0.5" y="1.5" width="11" height="1.6" fill="#8d92aa"/><rect x="4" y="0" width="4" height="2" fill="#8d92aa"/><path d="M1.4 4h9.2l-0.6 9.4h-8z" fill="#8d92aa"/></svg><div style="left:15px;top:488px;width:8px;height:29px;background:#cba6f7;border-radius:3px"></div><div class="t" style="left:20.399999999999977px;width:60px;text-align:right;top:493.84px;font-size:13px;line-height:20px;color:#d99fb3;font-weight:normal;font-family:'Liberation Mono', monospace;">[3]:</div><div class="t" style="left:95px;top:493.84px;font-size:13px;line-height:20px;color:#cdd6f4;font-weight:normal;font-family:'Liberation Mono', monospace;">23</div><div style="left:87px;top:527px;width:530px;height:119px;background:#181825;border:1px solid #7e8093"></div><div class="t" style="left:20.399999999999977px;width:60px;text-align:right;top:532.14px;font-size:13px;line-height:20px;color:#585b70;font-weight:normal;font-family:'Liberation Mono', monospace;">[4]:</div><div class="t" style="left:94px;top:532.14px;font-size:13px;line-height:20px;color:#cdd6f4;font-weight:normal;font-family:'Liberation Mono', monospace;">pd.<span class="p">DataFrame</span>(</div><div class="t" style="left:94px;top:550.29px;font-size:13px;line-height:20px;color:#cdd6f4;font-weight:normal;font-family:'Liberation Mono', monospace;">    <span class="br">{</span></div><div class="t" style="left:94px;top:568.44px;font-size:13px;line-height:20px;color:#cdd6f4;font-weight:normal;font-family:'Liberation Mono', monospace;">        <span class="s">"group"</span> : <span class="br">[</span><span class="s">"A"</span>, <span class="s">"B"</span>, <span class="s">"C"</span><span class="br">]</span>,</div><div class="t" style="left:94px;top:586.59px;font-size:13px;line-height:20px;color:#cdd6f4;font-weight:normal;font-family:'Liberation Mono', monospace;">        <span class="s">"value"</span> : <span class="br">[</span><span class="n">10</span>, <span class="n">20</span>, <span class="n">30</span><span class="br">]</span></div><div class="t" style="left:94px;top:604.74px;font-size:13px;line-height:20px;color:#cdd6f4;font-weight:normal;font-family:'Liberation Mono', monospace;">    <span class="br">}</span></div><div class="t" style="left:94px;top:622.89px;font-size:13px;line-height:20px;color:#cdd6f4;font-weight:normal;font-family:'Liberation Mono', monospace;">)</div><div class="t" style="left:20.399999999999977px;width:60px;text-align:right;top:655.54px;font-size:13px;line-height:20px;color:#585b70;font-weight:normal;font-family:'Liberation Mono', monospace;">[4]:</div><div class="t" style="left:70px;width:80px;text-align:right;top:654.50px;font-size:13px;line-height:20px;color:#cdd6f4;font-weight:bold;font-family:'Liberation Sans', sans-serif;">group</div><div class="t" style="left:116.5px;width:80px;text-align:right;top:654.50px;font-size:13px;line-height:20px;color:#cdd6f4;font-weight:bold;font-family:'Liberation Sans', sans-serif;">value</div><div style="left:87px;top:679px;width:115px;height:1px;background:#11111b"></div><div style="left:87px;top:708px;width:115px;height:28px;background:#181825"></div><div class="t" style="left:93.5px;top:683.90px;font-size:13px;line-height:20px;color:#cdd6f4;font-weight:bold;font-family:'Liberation Sans', sans-serif;">0</div><div class="t" style="left:90px;width:60px;text-align:right;top:683.90px;font-size:13px;line-height:20px;color:#cdd6f4;font-weight:normal;font-family:'Liberation Sans', sans-serif;">A</div><div class="t" style="left:136.5px;width:60px;text-align:right;top:683.90px;font-size:13px;line-height:20px;color:#cdd6f4;font-weight:normal;font-family:'Liberation Sans', sans-serif;">10</div><div class="t" style="left:93.5px;top:711.90px;font-size:13px;line-height:20px;color:#cdd6f4;font-weight:bold;font-family:'Liberation Sans', sans-serif;">1</div><div class="t" style="left:90px;width:60px;text-align:right;top:711.90px;font-size:13px;line-height:20px;color:#cdd6f4;font-weight:normal;font-family:'Liberation Sans', sans-serif;">B</div><div class="t" style="left:136.5px;width:60px;text-align:right;top:711.90px;font-size:13px;line-height:20px;color:#cdd6f4;font-weight:normal;font-family:'Liberation Sans', sans-serif;">20</div><div class="t" style="left:93.5px;top:739.90px;font-size:13px;line-height:20px;color:#cdd6f4;font-weight:bold;font-family:'Liberation Sans', sans-serif;">2</div><div class="t" style="left:90px;width:60px;text-align:right;top:739.90px;font-size:13px;line-height:20px;color:#cdd6f4;font-weight:normal;font-family:'Liberation Sans', sans-serif;">C</div><div class="t" style="left:136.5px;width:60px;text-align:right;top:739.90px;font-size:13px;line-height:20px;color:#cdd6f4;font-weight:normal;font-family:'Liberation Sans', sans-serif;">30</div></div><div style="left:930px;top:88px;width:631px;height:782px;overflow:hidden"><div style="left:87px;top:-18px;width:530px;height:54px;background:#181825;border:1px solid #7e8093"></div><div class="t" style="left:94px;top:12.74px;font-size:13px;line-height:20px;color:#cdd6f4;font-weight:normal;font-family:'Liberation Mono', monospace;">df_stats</div><div class="t" style="left:143.20000000000005px;width:200px;text-align:center;top:41.50px;font-size:13px;line-height:20px;color:#cdd6f4;font-weight:normal;font-family:'Liberation Sans', sans-serif;">A tibble: 7 × 3</div><div class="t" style="left:156px;width:80px;text-align:right;top:65.80px;font-size:13px;line-height:20px;color:#cdd6f4;font-weight:bold;font-family:'Liberation Sans', sans-serif;">film</div><div class="t" style="left:217.5px;width:100px;text-align:right;top:65.80px;font-size:13px;line-height:20px;color:#cdd6f4;font-weight:bold;font-family:'Liberation Sans', sans-serif;">avg_height</div><div class="t" style="left:293.5px;width:100px;text-align:right;top:65.80px;font-size:13px;line-height:20px;color:#cdd6f4;font-weight:bold;font-family:'Liberation Sans', sans-serif;">q95_mass</div><div class="t" style="left:156px;width:80px;text-align:right;top:93.70px;font-size:13px;line-height:20px;color:#cdd6f4;font-weight:bold;font-family:'Liberation Sans', sans-serif;">&lt;chr&gt;</div><div class="t" style="left:217.5px;width:100px;text-align:right;top:93.70px;font-size:13px;line-height:20px;color:#cdd6f4;font-weight:bold;font-family:'Liberation Sans', sans-serif;">&lt;dbl&gt;</div><div class="t" style="left:293.5px;width:100px;text-align:right;top:93.70px;font-size:13px;line-height:20px;color:#cdd6f4;font-weight:bold;font-family:'Liberation Sans', sans-serif;">&lt;dbl&gt;</div><div style="left:87px;top:117px;width:313px;height:1px;background:#11111b"></div><div class="t" style="left:36px;width:200px;text-align:right;top:122.50px;font-size:13px;line-height:20px;color:#cdd6f4;font-weight:normal;font-family:'Liberation Sans', sans-serif;">A New Hope</div><div class="t" style="left:217.5px;width:100px;text-align:right;top:122.50px;font-size:13px;line-height:20px;color:#cdd6f4;font-weight:normal;font-family:'Liberation Sans', sans-serif;">170.3333</div><div class="t" style="left:293.5px;width:100px;text-align:right;top:122.50px;font-size:13px;line-height:20px;color:#cdd6f4;font-weight:normal;font-family:'Liberation Sans', sans-serif;">380.40</div><div style="left:87px;top:146px;width:313px;height:28px;background:#181825"></div><div class="t" style="left:36px;width:200px;text-align:right;top:150.50px;font-size:13px;line-height:20px;color:#cdd6f4;font-weight:normal;font-family:'Liberation Sans', sans-serif;">Attack of the Clones</div><div class="t" style="left:217.5px;width:100px;text-align:right;top:150.50px;font-size:13px;line-height:20px;color:#cdd6f4;font-weight:normal;font-family:'Liberation Sans', sans-serif;">174.4500</div><div class="t" style="left:293.5px;width:100px;text-align:right;top:150.50px;font-size:13px;line-height:20px;color:#cdd6f4;font-weight:normal;font-family:'Liberation Sans', sans-serif;">97.20</div><div class="t" style="left:36px;width:200px;text-align:right;top:178.50px;font-size:13px;line-height:20px;color:#cdd6f4;font-weight:normal;font-family:'Liberation Sans', sans-serif;">Return of the Jedi</div><div class="t" style="left:217.5px;width:100px;text-align:right;top:178.50px;font-size:13px;line-height:20px;color:#cdd6f4;font-weight:normal;font-family:'Liberation Sans', sans-serif;">161.8947</div><div class="t" style="left:293.5px;width:100px;text-align:right;top:178.50px;font-size:13px;line-height:20px;color:#cdd6f4;font-weight:normal;font-family:'Liberation Sans', sans-serif;">380.40</div><div style="left:87px;top:202px;width:313px;height:28px;background:#181825"></div><div class="t" style="left:36px;width:200px;text-align:right;top:206.50px;font-size:13px;line-height:20px;color:#cdd6f4;font-weight:normal;font-family:'Liberation Sans', sans-serif;">Revenge of the Sith</div><div class="t" style="left:217.5px;width:100px;text-align:right;top:206.50px;font-size:13px;line-height:20px;color:#cdd6f4;font-weight:normal;font-family:'Liberation Sans', sans-serif;">177.1765</div><div class="t" style="left:293.5px;width:100px;text-align:right;top:206.50px;font-size:13px;line-height:20px;color:#cdd6f4;font-weight:normal;font-family:'Liberation Sans', sans-serif;">136.00</div><div class="t" style="left:36px;width:200px;text-align:right;top:234.50px;font-size:13px;line-height:20px;color:#cdd6f4;font-weight:normal;font-family:'Liberation Sans', sans-serif;">The Empire Strikes Back</div><div class="t" style="left:217.5px;width:100px;text-align:right;top:234.50px;font-size:13px;line-height:20px;color:#cdd6f4;font-weight:normal;font-family:'Liberation Sans', sans-serif;">169.2500</div><div class="t" style="left:293.5px;width:100px;text-align:right;top:234.50px;font-size:13px;line-height:20px;color:#cdd6f4;font-weight:normal;font-family:'Liberation Sans', sans-serif;">137.00</div><div style="left:87px;top:258px;width:313px;height:28px;background:#586b9c"></div><div class="t" style="left:36px;width:200px;text-align:right;top:262.50px;font-size:13px;line-height:20px;color:#c6cff5;font-weight:normal;font-family:'Liberation Sans', sans-serif;">The Force Awakens</div><div class="t" style="left:217.5px;width:100px;text-align:right;top:262.50px;font-size:13px;line-height:20px;color:#c6cff5;font-weight:normal;font-family:'Liberation Sans', sans-serif;">167.6667</div><div class="t" style="left:293.5px;width:100px;text-align:right;top:262.50px;font-size:13px;line-height:20px;color:#c6cff5;font-weight:normal;font-family:'Liberation Sans', sans-serif;">104.75</div><div class="t" style="left:36px;width:200px;text-align:right;top:290.50px;font-size:13px;line-height:20px;color:#cdd6f4;font-weight:normal;font-family:'Liberation Sans', sans-serif;">The Phantom Menace</div><div class="t" style="left:217.5px;width:100px;text-align:right;top:290.50px;font-size:13px;line-height:20px;color:#cdd6f4;font-weight:normal;font-family:'Liberation Sans', sans-serif;">169.1471</div><div class="t" style="left:293.5px;width:100px;text-align:right;top:290.50px;font-size:13px;line-height:20px;color:#cdd6f4;font-weight:normal;font-family:'Liberation Sans', sans-serif;">89.90</div><div style="left:15px;top:331px;width:8px;height:137px;background:#cba6f7;border-radius:3px"></div><div style="left:87px;top:331px;width:530px;height:137px;background:#181825;border:1px solid #7e8093"></div><div class="t" style="left:20.399999999999977px;width:60px;text-align:right;top:336.54px;font-size:13px;line-height:20px;color:#7d9cd0;font-weight:normal;font-family:'Liberation Mono', monospace;">[5]:</div><div style="left:88px;top:332px;width:528px;height:135px;overflow:hidden"><div class="t" style="left:6px;top:4.54px;font-size:13px;line-height:20px;color:#cdd6f4;font-weight:normal;font-family:'Liberation Mono', monospace;">options(repr.plot.width <span class="o">=</span> <span class="n">4</span>, repr.plot.height <span class="o">=</span> <span class="n">3</span>, repr.plot.res <span class="o">=</span> <span class="n">100</span>)</div><div class="t" style="left:6px;top:22.69px;font-size:13px;line-height:20px;color:#cdd6f4;font-weight:normal;font-family:'Liberation Mono', monospace;"></div><div class="t" style="left:6px;top:40.84px;font-size:13px;line-height:20px;color:#cdd6f4;font-weight:normal;font-family:'Liberation Mono', monospace;">df_stats <span class="o">|&gt;</span></div><div class="t" style="left:6px;top:58.99px;font-size:13px;line-height:20px;color:#cdd6f4;font-weight:normal;font-family:'Liberation Mono', monospace;">    ggplot(aes(x<span class="o">=</span>film, y<span class="o">=</span>avg_height, fill<span class="o">=</span>film)) <span class="o">+</span></div><div class="t" style="left:6px;top:77.14px;font-size:13px;line-height:20px;color:#cdd6f4;font-weight:normal;font-family:'Liberation Mono', monospace;">    geom_col() <span class="o">+</span></div><div class="t" style="left:6px;top:95.29px;font-size:13px;line-height:20px;color:#cdd6f4;font-weight:normal;font-family:'Liberation Mono', monospace;">    coord_flip() <span class="o">+</span></div><div class="t" style="left:6px;top:113.44px;font-size:13px;line-height:20px;color:#cdd6f4;font-weight:normal;font-family:'Liberation Mono', monospace;">    theme(legend.position<span class="o">=</span><span class="s">"none"</span>)</div></div><div style="left:15px;top:473px;width:8px;height:303px;background:#cba6f7;border-radius:3px"></div><div style="left:87px;top:473px;width:400px;height:300px;background:#fff;overflow:hidden"><svg style="left:0;top:0" width="400" height="300" viewBox="0 0 400 300"><rect x="168" y="7.5" width="224.4000000000001" height="245.29999999999995" fill="#EBEBEB"/><line x1="206.59999999999997" y1="7.5" x2="206.59999999999997" y2="252.79999999999995" stroke="#fff" stroke-width="0.55"/><line x1="264.19999999999993" y1="7.5" x2="264.19999999999993" y2="252.79999999999995" stroke="#fff" stroke-width="0.55"/><line x1="321.79999999999995" y1="7.5" x2="321.79999999999995" y2="252.79999999999995" stroke="#fff" stroke-width="0.55"/><line x1="379.4" y1="7.5" x2="379.4" y2="252.79999999999995" stroke="#fff" stroke-width="0.55"/><line x1="177.79999999999995" y1="7.5" x2="177.79999999999995" y2="252.79999999999995" stroke="#fff" stroke-width="1.1"/><line x1="235.39999999999995" y1="7.5" x2="235.39999999999995" y2="252.79999999999995" stroke="#fff" stroke-width="1.1"/><line x1="292.99999999999994" y1="7.5" x2="292.99999999999994" y2="252.79999999999995" stroke="#fff" stroke-width="1.1"/><line x1="350.5999999999999" y1="7.5" x2="350.5999999999999" y2="252.79999999999995" stroke="#fff" stroke-width="1.1"/><line x1="168" y1="27.8" x2="392.4000000000001" y2="27.8" stroke="#fff" stroke-width="1.1"/><line x1="168" y1="62.085714285714275" x2="392.4000000000001" y2="62.085714285714275" stroke="#fff" stroke-width="1.1"/><line x1="168" y1="96.37142857142855" x2="392.4000000000001" y2="96.37142857142855" stroke="#fff" stroke-width="1.1"/><line x1="168" y1="130.65714285714284" x2="392.4000000000001" y2="130.65714285714284" stroke="#fff" stroke-width="1.1"/><line x1="168" y1="164.94285714285712" x2="392.4000000000001" y2="164.94285714285712" stroke="#fff" stroke-width="1.1"/><line x1="168" y1="199.2285714285714" x2="392.4000000000001" y2="199.2285714285714" stroke="#fff" stroke-width="1.1"/><line x1="168" y1="233.51428571428568" x2="392.4000000000001" y2="233.51428571428568" stroke="#fff" stroke-width="1.1"/><rect x="177.79999999999995" y="12.5" width="194.85745919999997" height="30.6" fill="#FB61D7"/><line x1="164.5" y1="27.8" x2="168" y2="27.8" stroke="#333" stroke-width="1.1"/><text x="161.3" y="32.1" font-family="Liberation Sans" font-size="12.4" fill="#4D4D4D" text-anchor="end">The Phantom Menace</text><rect x="177.79999999999995" y="46.78571428571428" width="193.15203839999998" height="30.6" fill="#A58AFF"/><line x1="164.5" y1="62.085714285714275" x2="168" y2="62.085714285714275" stroke="#333" stroke-width="1.1"/><text x="161.3" y="66.38571428571427" font-family="Liberation Sans" font-size="12.4" fill="#4D4D4D" text-anchor="end">The Force Awakens</text><rect x="177.79999999999995" y="81.07142857142856" width="194.976" height="30.6" fill="#00B6EB"/><line x1="164.5" y1="96.37142857142855" x2="168" y2="96.37142857142855" stroke="#333" stroke-width="1.1"/><text x="161.3" y="100.67142857142855" font-family="Liberation Sans" font-size="12.4" fill="#4D4D4D" text-anchor="end">The Empire Strikes Back</text><rect x="177.79999999999995" y="115.35714285714285" width="204.107328" height="30.6" fill="#00C094"/><line x1="164.5" y1="130.65714285714284" x2="168" y2="130.65714285714284" stroke="#333" stroke-width="1.1"/><text x="161.3" y="134.95714285714286" font-family="Liberation Sans" font-size="12.4" fill="#4D4D4D" text-anchor="end">Revenge of the Sith</text><rect x="177.79999999999995" y="149.6428571428571" width="186.5026944" height="30.6" fill="#53B400"/><line x1="164.5" y1="164.94285714285712" x2="168" y2="164.94285714285712" stroke="#333" stroke-width="1.1"/><text x="161.3" y="169.24285714285713" font-family="Liberation Sans" font-size="12.4" fill="#4D4D4D" text-anchor="end">Return of the Jedi</text><rect x="177.79999999999995" y="183.9285714285714" width="200.96639999999996" height="30.6" fill="#C49A00"/><line x1="164.5" y1="199.2285714285714" x2="168" y2="199.2285714285714" stroke="#333" stroke-width="1.1"/><text x="161.3" y="203.5285714285714" font-family="Liberation Sans" font-size="12.4" fill="#4D4D4D" text-anchor="end">Attack of the Clones</text><rect x="177.79999999999995" y="218.21428571428567" width="196.2239616" height="30.6" fill="#F8766D"/><line x1="164.5" y1="233.51428571428568" x2="168" y2="233.51428571428568" stroke="#333" stroke-width="1.1"/><text x="161.3" y="237.8142857142857" font-family="Liberation Sans" font-size="12.4" fill="#4D4D4D" text-anchor="end">A New Hope</text><line x1="177.79999999999995" y1="252.79999999999995" x2="177.79999999999995" y2="256.4" stroke="#333" stroke-width="1.1"/><text x="177.79999999999995" y="269.5" font-family="Liberation Sans" font-size="12.27" fill="#4D4D4D" text-anchor="middle">0</text><line x1="235.39999999999995" y1="252.79999999999995" x2="235.39999999999995" y2="256.4" stroke="#333" stroke-width="1.1"/><text x="235.39999999999995" y="269.5" font-family="Liberation Sans" font-size="12.27" fill="#4D4D4D" text-anchor="middle">50</text><line x1="292.99999999999994" y1="252.79999999999995" x2="292.99999999999994" y2="256.4" stroke="#333" stroke-width="1.1"/><text x="292.99999999999994" y="269.5" font-family="Liberation Sans" font-size="12.27" fill="#4D4D4D" text-anchor="middle">100</text><line x1="350.5999999999999" y1="252.79999999999995" x2="350.5999999999999" y2="256.4" stroke="#333" stroke-width="1.1"/><text x="350.5999999999999" y="269.5" font-family="Liberation Sans" font-size="12.27" fill="#4D4D4D" text-anchor="middle">150</text><text x="280.20000000000005" y="287.5" font-family="Liberation Sans" font-size="15.3" fill="#000" text-anchor="middle">avg_height</text><text transform="translate(19,130.20000000000005) rotate(-90)" font-family="Liberation Sans" font-size="15.3" fill="#000" text-anchor="middle">film</text></svg></div></div><div class="t" style="left:28.25px;top:878.50px;font-size:13px;line-height:20px;color:#cdd6f4;font-weight:normal;font-family:'Liberation Sans', sans-serif;">Simple</div><div style="left:73px;top:880px;width:35px;height:16px;border-radius:8px;background:#bac2de"></div><div style="left:76px;top:883px;width:10px;height:10px;border-radius:5px;background:#11111b"></div><div class="t" style="left:134.25px;top:878.50px;font-size:13px;line-height:20px;color:#cdd6f4;font-weight:normal;font-family:'Liberation Sans', sans-serif;">0</div><div style="left:153px;top:883px;width:15px;height:15px;background:#585b70"></div><div class="t" style="left:155px;top:881.38px;font-size:9px;line-height:20px;color:#cdd6f4;font-weight:bold;font-family:'Liberation Sans', sans-serif;">$_</div><div class="t" style="left:177.5px;top:878.50px;font-size:13px;line-height:20px;color:#cdd6f4;font-weight:normal;font-family:'Liberation Sans', sans-serif;">2</div><svg style="left:195px;top:881.5px" width="14" height="14" viewBox="0 0 14 14"><rect x="2.5" y="2.5" width="9" height="9" rx="0.8" fill="none" stroke="#8d92aa" stroke-width="1.3"/><rect x="5" y="5" width="4" height="4" fill="none" stroke="#8d92aa" stroke-width="1.2"/><path d="M5 0v2.5M9 0v2.5M5 11.5V14M9 11.5V14M0 5h2.5M0 9h2.5M11.5 5H14M11.5 9H14" stroke="#8d92aa" stroke-width="1.2"/></svg><div class="t" style="left:228.25px;top:878.50px;font-size:13px;line-height:20px;color:#cdd6f4;font-weight:normal;font-family:'Liberation Sans', sans-serif;">Python 3 (ipykernel) | Idle</div><div class="t" style="left:1249.7px;top:878.50px;font-size:13px;line-height:20px;color:#cdd6f4;font-weight:normal;font-family:'Liberation Sans', sans-serif;">Mode: Edit</div><svg style="left:1330px;top:881px" width="16" height="14" viewBox="0 0 16 14"><path d="M8 0.8L14 3v4c0 3.4-2.8 5.8-6 6.6C4.8 12.8 2 10.4 2 7V3z" fill="none" stroke="#8d92aa" stroke-width="1.3"/><path d="M5.2 7l2 2L11 5.2" fill="none" stroke="#8d92aa" stroke-width="1.3"/></svg><div class="t" style="left:1364.1px;top:878.50px;font-size:13px;line-height:20px;color:#cdd6f4;font-weight:normal;font-family:'Liberation Sans', sans-serif;">Ln 14, Col 18</div><div class="t" style="left:1457.3px;top:878.50px;font-size:13px;line-height:20px;color:#cdd6f4;font-weight:normal;font-family:'Liberation Sans', sans-serif;">python.ipynb</div><div class="t" style="left:1547.3px;top:878.50px;font-size:13px;line-height:20px;color:#cdd6f4;font-weight:normal;font-family:'Liberation Sans', sans-serif;">1</div><svg style="left:1564px;top:880px" width="17" height="18" viewBox="0 0 17 18"><path d="M8.5 1.2c-3 0-5.2 2.4-5.2 5.4v4.6L1.2 14h14.6l-2.1-2.8V6.6c0-3-2.2-5.4-5.2-5.4z" fill="none" stroke="#8d92aa" stroke-width="1.4"/><path d="M6.6 15.6a2 2 0 0 0 3.8 0" fill="none" stroke="#8d92aa" stroke-width="1.4"/></svg></div>
</body></html>
